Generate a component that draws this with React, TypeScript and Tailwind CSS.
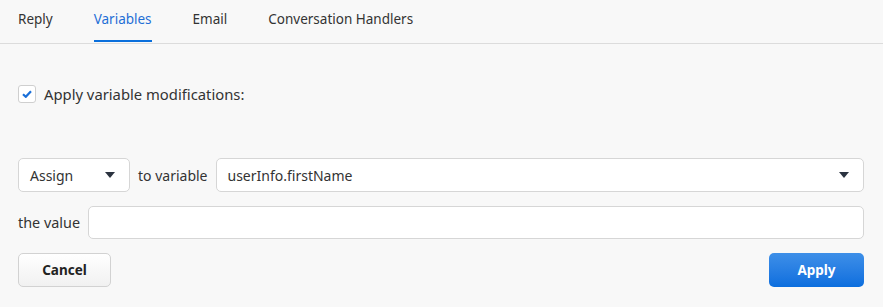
import React from "react";

const Arrow = () => (
  <svg width="10" height="6" viewBox="0 0 10 6" className="shrink-0">
    <path d="M0 0 H10 L5 6 Z" fill="#2b3340" />
  </svg>
);

export default function App() {
  const tabs = ["Reply", "Variables", "Email", "Conversation Handlers"];
  return (
    <div
      className="w-[883px] h-[307px] bg-[#f8f8f8] overflow-hidden relative text-[#333]"
      style={{ fontFamily: '"Noto Sans", "Open Sans", sans-serif' }}
    >
      <div className="h-[44px] border-b border-[#dcdcdc] flex px-[18px] gap-[41px]">
        {tabs.map((t) => (
          <div
            key={t}
            className={`relative h-full pt-[9px] text-[13.5px] leading-[20px] ${
              t === "Variables" ? "text-[#1f6fd6]" : "text-[#333]"
            }`}
          >
            {t}
            {t === "Variables" && (
              <div className="absolute left-0 right-0 bottom-[1px] h-[2px] bg-[#0a6fdc]" />
            )}
          </div>
        ))}
      </div>

      <div className="pl-[18px] pr-[19px]">
        <div className="mt-[41px] flex items-center gap-[8px] h-[18px]">
          <div className="w-[18px] h-[18px] rounded-[3px] border border-[#cfcfcf] bg-white flex items-center justify-center">
            <svg width="10" height="8" viewBox="0 0 10 8">
              <path d="M1 4.2 L3.8 6.8 L9 1.2" stroke="#1a6fd8" strokeWidth="2.2" fill="none" />
            </svg>
          </div>
          <span className="text-[14.8px] text-[#333]">Apply variable modifications:</span>
        </div>

        <div className="mt-[55px] flex items-center gap-[8px] h-[34px]">
          <div className="w-[112px] h-full rounded-[5px] border border-[#d6d6d6] bg-white flex items-center justify-between pl-[11px] pr-[14px] text-[14px]">
            <span>Assign</span>
            <Arrow />
          </div>
          <span className="text-[14px]">to variable</span>
          <div className="flex-1 h-full rounded-[5px] border border-[#d6d6d6] bg-white flex items-center justify-between pl-[11px] pr-[14px] text-[14px]">
            <span>userInfo.firstName</span>
            <Arrow />
          </div>
        </div>

        <div className="mt-[14px] flex items-center gap-[8px] h-[33px]">
          <span className="text-[14.4px]">the value</span>
          <div className="flex-1 h-full rounded-[5px] border border-[#d6d6d6] bg-white" />
        </div>

        <div className="mt-[14px] flex items-center justify-between h-[34px]">
          <button className="w-[93px] h-full rounded-[5px] border border-[#d2d2d2] bg-gradient-to-b from-white to-[#f1f1f1] text-[13.5px] font-bold text-[#222]">
            Cancel
          </button>
          <button className="w-[95px] h-full rounded-[5px] bg-gradient-to-b from-[#3d8fe8] to-[#0a6ede] text-[13.5px] font-bold text-white">
            Apply
          </button>
        </div>
      </div>
    </div>
  );
}
